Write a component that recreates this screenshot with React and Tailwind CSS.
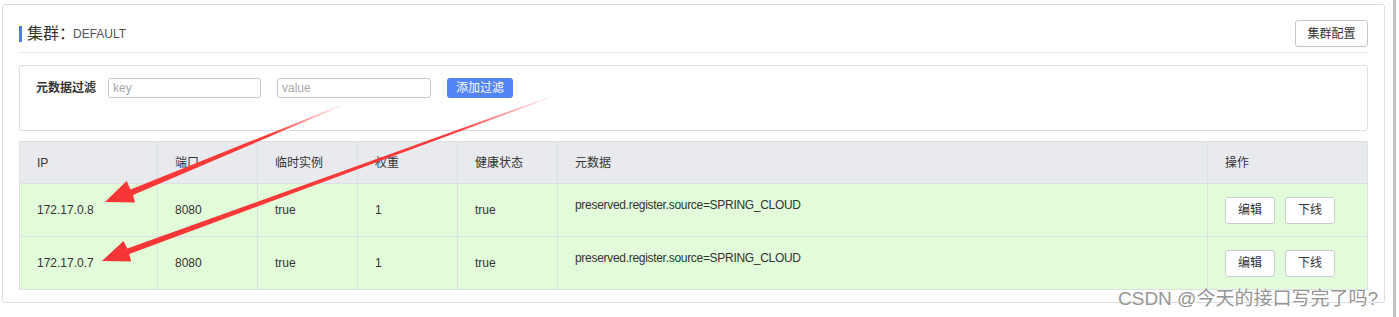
const FONT = 'font-["Liberation_Sans","Noto_Sans_CJK_SC",sans-serif]';

const COLS = [
  { key: 'ip', label: 'IP', w: 'w-[138px]' },
  { key: 'port', label: '端口', w: 'w-[100px]' },
  { key: 'ephemeral', label: '临时实例', w: 'w-[100px]' },
  { key: 'weight', label: '权重', w: 'w-[100px]' },
  { key: 'healthy', label: '健康状态', w: 'w-[100px]' },
  { key: 'metadata', label: '元数据', w: 'w-[650px]' },
  { key: 'ops', label: '操作', w: 'flex-1' },
];

const ROWS = [
  { ip: '172.17.0.8', port: '8080', ephemeral: 'true', weight: '1', healthy: 'true', metadata: 'preserved.register.source=SPRING_CLOUD' },
  { ip: '172.17.0.7', port: '8080', ephemeral: 'true', weight: '1', healthy: 'true', metadata: 'preserved.register.source=SPRING_CLOUD' },
];

function SmallButton({ children }) {
  return (
    <button className="h-[27px] w-[50px] rounded-[3px] border border-[#c9ccd3] bg-white text-[12px] text-[#333]">
      {children}
    </button>
  );
}

export default function App() {
  return (
    <div className={`relative h-[317px] w-[1396px] border-r-[3px] border-[#c4c4c4] bg-white ${FONT}`}>
      <div className="ml-[2px] w-[1383px] pt-[4px]">
        <div className="h-[299px] rounded-[3px] border border-[#dcdde2] bg-white px-4">
          {/* title row */}
          <div className="flex items-center justify-between border-b border-[#e4e5e9] pt-[15px] pb-[5px]">
            <div className="flex items-center">
              <span className="mr-[5px] h-[16px] w-[3px] bg-[#4d7cf6]" />
              <span className="text-[16px] leading-none text-[#333]">集群：</span>
              <span className="-ml-[2px] text-[12px] leading-none text-[#555]">DEFAULT</span>
            </div>
            <button className="h-[27px] w-[73px] rounded-[3px] border border-[#c4c6cc] bg-white text-[12px] text-[#333]">
              集群配置
            </button>
          </div>

          {/* filter */}
          <div className="mt-[12px] h-[66px] rounded-[3px] border border-[#dcdde2] px-4 pt-[12px]">
            <div className="flex items-center">
              <span className="w-[72px] text-[12px] font-bold text-[#333]">元数据过滤</span>
              <input
                placeholder="key"
                className="h-[20px] w-[153px] rounded-[3px] border border-[#c4c6cc] px-[4px] text-[12px] placeholder:text-[#a8a8a8] outline-none"
              />
              <input
                placeholder="value"
                className="ml-[16px] h-[20px] w-[154px] rounded-[3px] border border-[#c4c6cc] px-[4px] text-[12px] placeholder:text-[#a8a8a8] outline-none"
              />
              <button className="ml-[16px] h-[20px] w-[66px] rounded-[3px] bg-[#5485f7] text-[12px] text-white">
                添加过滤
              </button>
            </div>
          </div>

          {/* table */}
          <div className="mt-[10px] border-l border-t border-[#dcdfe6] text-[12px] text-[#333]">
            <div className="flex h-[42px] bg-[#e9eaee]">
              {COLS.map((c) => (
                <div key={c.key} className={`${c.w} flex items-center border-r border-b border-[#dcdfe6] pl-[17px]`}>
                  {c.label}
                </div>
              ))}
            </div>
            {ROWS.map((r, i) => (
              <div key={i} className="flex h-[53px] bg-[#e2fcda]">
                {COLS.map((c) => (
                  <div
                    key={c.key}
                    className={`${c.w} flex border-r border-b border-[#dcdfe6] pl-[17px] ${
                      c.key === 'metadata' ? 'items-start pt-[11px] leading-[20px] tracking-[-0.3px]' : 'items-center'
                    }`}
                  >
                    {c.key === 'ops' ? (
                      <div className="flex gap-[10px]">
                        <SmallButton>编辑</SmallButton>
                        <SmallButton>下线</SmallButton>
                      </div>
                    ) : (
                      r[c.key]
                    )}
                  </div>
                ))}
              </div>
            ))}
          </div>
        </div>
      </div>

      {/* annotation arrows */}
      <svg className="pointer-events-none absolute left-0 top-0" width="1396" height="317">
        <defs>
          <linearGradient id="fade1" x1="340" y1="106" x2="105" y2="202" gradientUnits="userSpaceOnUse">
            <stop offset="0" stopColor="#ff4040" stopOpacity="0.1" />
            <stop offset="0.3" stopColor="#ff3c3c" />
            <stop offset="1" stopColor="#f53535" />
          </linearGradient>
          <linearGradient id="fade2" x1="548" y1="98" x2="102" y2="261" gradientUnits="userSpaceOnUse">
            <stop offset="0" stopColor="#ff4040" stopOpacity="0.1" />
            <stop offset="0.2" stopColor="#ff3c3c" />
            <stop offset="1" stopColor="#f53535" />
          </linearGradient>
        </defs>
        <polygon
          fill="url(#fade1)"
          points="339.8,105.5 130.6,189.4 126.6,181 105,202 135,202.4 133,195 340.2,106.5"
        />
        <polygon
          fill="url(#fade2)"
          points="547.8,97.5 127.3,248.5 123.5,241 102,261 131.1,261.6 129.3,254.1 548.2,98.5"
        />
      </svg>

      {/* watermark */}
      <span className="absolute left-[1118px] top-[287px] whitespace-nowrap text-[19px] leading-[24px] text-[#959595] [text-shadow:0_0_2px_#fff,0_0_2px_#fff]">
        CSDN @今天的接口写完了吗?
      </span>
    </div>
  );
}
